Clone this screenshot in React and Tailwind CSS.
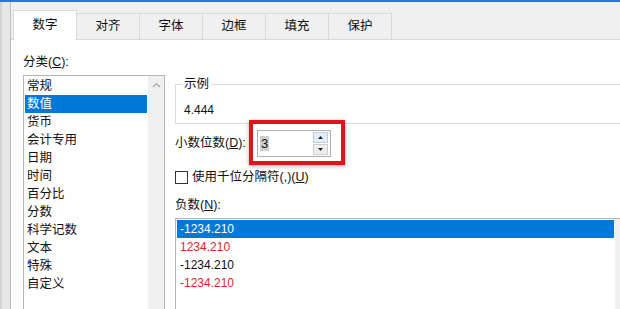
import React from 'react';

const tabs = ['数字', '对齐', '字体', '边框', '填充', '保护'];
const categories = ['常规', '数值', '货币', '会计专用', '日期', '时间', '百分比', '分数', '科学记数', '文本', '特殊', '自定义'];
const negatives = [
  { text: '-1234.210', red: false },
  { text: '1234.210', red: true },
  { text: '-1234.210', red: false },
  { text: '-1234.210', red: true },
];

const FormatCellsDialog = () => {
  return (
    <div
      className="relative w-[620px] h-[309px] overflow-hidden bg-white flex flex-col text-[12.5px] text-[#111]"
      style={{ fontFamily: '"Liberation Sans", "Noto Sans CJK SC", sans-serif' }}
    >
      <div className="h-[2px] bg-[#2b79d3] shrink-0" />
      <div className="flex flex-1 min-h-0">
        <div className="w-[11px] shrink-0 bg-[#e7e7e7] border-r border-[#bcbcbc] border-l-2 border-l-[#d4d4d4]" />
        <div className="flex-1 flex flex-col min-w-0">
          {/* tab strip */}
          <div className="h-[38px] shrink-0 flex items-end pl-[2px] bg-[#f0f0f0] border-b border-[#d9d9d9]">
            {tabs.map((t, i) =>
              i === 0 ? (
                <div
                  key={t}
                  className="relative z-10 -mb-px w-[64px] h-[30px] flex items-center justify-center bg-white border border-b-0 border-[#d9d9d9]"
                >
                  {t}
                </div>
              ) : (
                <div
                  key={t}
                  className="-ml-px w-[64px] h-[26px] flex items-center justify-center bg-[#f0f0f0] border border-b-0 border-[#d9d9d9]"
                >
                  {t}
                </div>
              )
            )}
          </div>

          {/* body */}
          <div className="flex-1 flex pl-[12px] pt-[13px] gap-[10px] min-h-0">
            {/* category list */}
            <div className="w-[142px] shrink-0 flex flex-col">
              <div className="h-[18px] leading-[18px]">
                分类(<span className="underline">C</span>):
              </div>
              <div className="mt-[4px] flex-1 flex border border-[#b4b6bb] border-b-0 min-h-0">
                <div className="flex-1 pt-px">
                  {categories.map((c, i) => (
                    <div
                      key={c}
                      className={
                        'mx-px h-[18px] leading-[18px] px-[2px] ' +
                        (i === 1 ? 'bg-[#0078d7] text-white' : '')
                      }
                    >
                      {c}
                    </div>
                  ))}
                </div>
                <div className="w-[16px] bg-[#f0f0f0] flex justify-center pt-[6px]">
                  <svg width="9" height="6" viewBox="0 0 9 6">
                    <polyline points="1,5 4.5,1.5 8,5" fill="none" stroke="#a8a8a8" strokeWidth="1.2" />
                  </svg>
                </div>
              </div>
            </div>

            {/* right side */}
            <div className="w-[458px] shrink-0 flex flex-col">
              <fieldset className="mt-[22px] border border-[#dcdcdc] pl-[6px] pb-[4px]">
                <legend className="px-[2px] h-[18px] leading-[18px]">示例</legend>
                <div className="mt-[8px] pl-[2px] h-[18px] leading-[18px] text-[12px]">4.444</div>
              </fieldset>

              <div className="mt-[6px] flex items-center h-[27px]">
                <div className="w-[82px]">
                  小数位数(<span className="underline">D</span>):
                </div>
                <div className="w-[74px] h-[27px] border border-[#adadad] bg-white flex items-center pl-[2px] pr-[2px]">
                  <span className="bg-[#cfcfcf] px-px leading-[15px] text-[13px]">3</span>
                  <div className="ml-auto w-[15px] h-[23px] flex flex-col gap-px">
                    <div className="flex-1 bg-[#e3eef9] border border-[#b9cde3] flex items-center justify-center">
                      <svg width="5" height="3" viewBox="0 0 5 3">
                        <polygon points="0,3 2.5,0 5,3" fill="#222" />
                      </svg>
                    </div>
                    <div className="flex-1 bg-[#eeeeee] border border-[#cfcfcf] flex items-center justify-center">
                      <svg width="5" height="3" viewBox="0 0 5 3">
                        <polygon points="0,0 5,0 2.5,3" fill="#222" />
                      </svg>
                    </div>
                  </div>
                </div>
              </div>

              <div className="mt-[11px] h-[18px] flex items-center gap-[4px]">
                <div className="w-[13px] h-[13px] border border-[#333] bg-white" />
                <span>
                  使用千位分隔符(,)(<span className="underline">U</span>)
                </span>
              </div>

              <div className="mt-[10px] h-[18px] leading-[18px]">
                负数(<span className="underline">N</span>):
              </div>
              <div className="mt-[4px] flex-1 flex border border-[#b4b6bb] border-b-0">
                <div className="flex-1 pt-px">
                  {negatives.map((n, i) => (
                    <div
                      key={i}
                      className={
                        'mx-px h-[18px] leading-[18px] px-[3px] text-[12px] ' +
                        (i === 0 ? 'bg-[#0078d7] text-white' : n.red ? 'text-[#e0262b]' : '')
                      }
                    >
                      {n.text}
                    </div>
                  ))}
                </div>
                <div className="w-[17px] bg-[#f0f0f0]" />
              </div>
            </div>
          </div>
        </div>
      </div>

      {/* red highlight annotation */}
      <div className="absolute left-[249px] top-[120px] w-[96px] h-[45px] border-4 border-[#e1141c] shadow-[0_1px_4px_rgba(0,0,0,0.35)] pointer-events-none" />
    </div>
  );
};

export default function App() {
  return <FormatCellsDialog />;
}
